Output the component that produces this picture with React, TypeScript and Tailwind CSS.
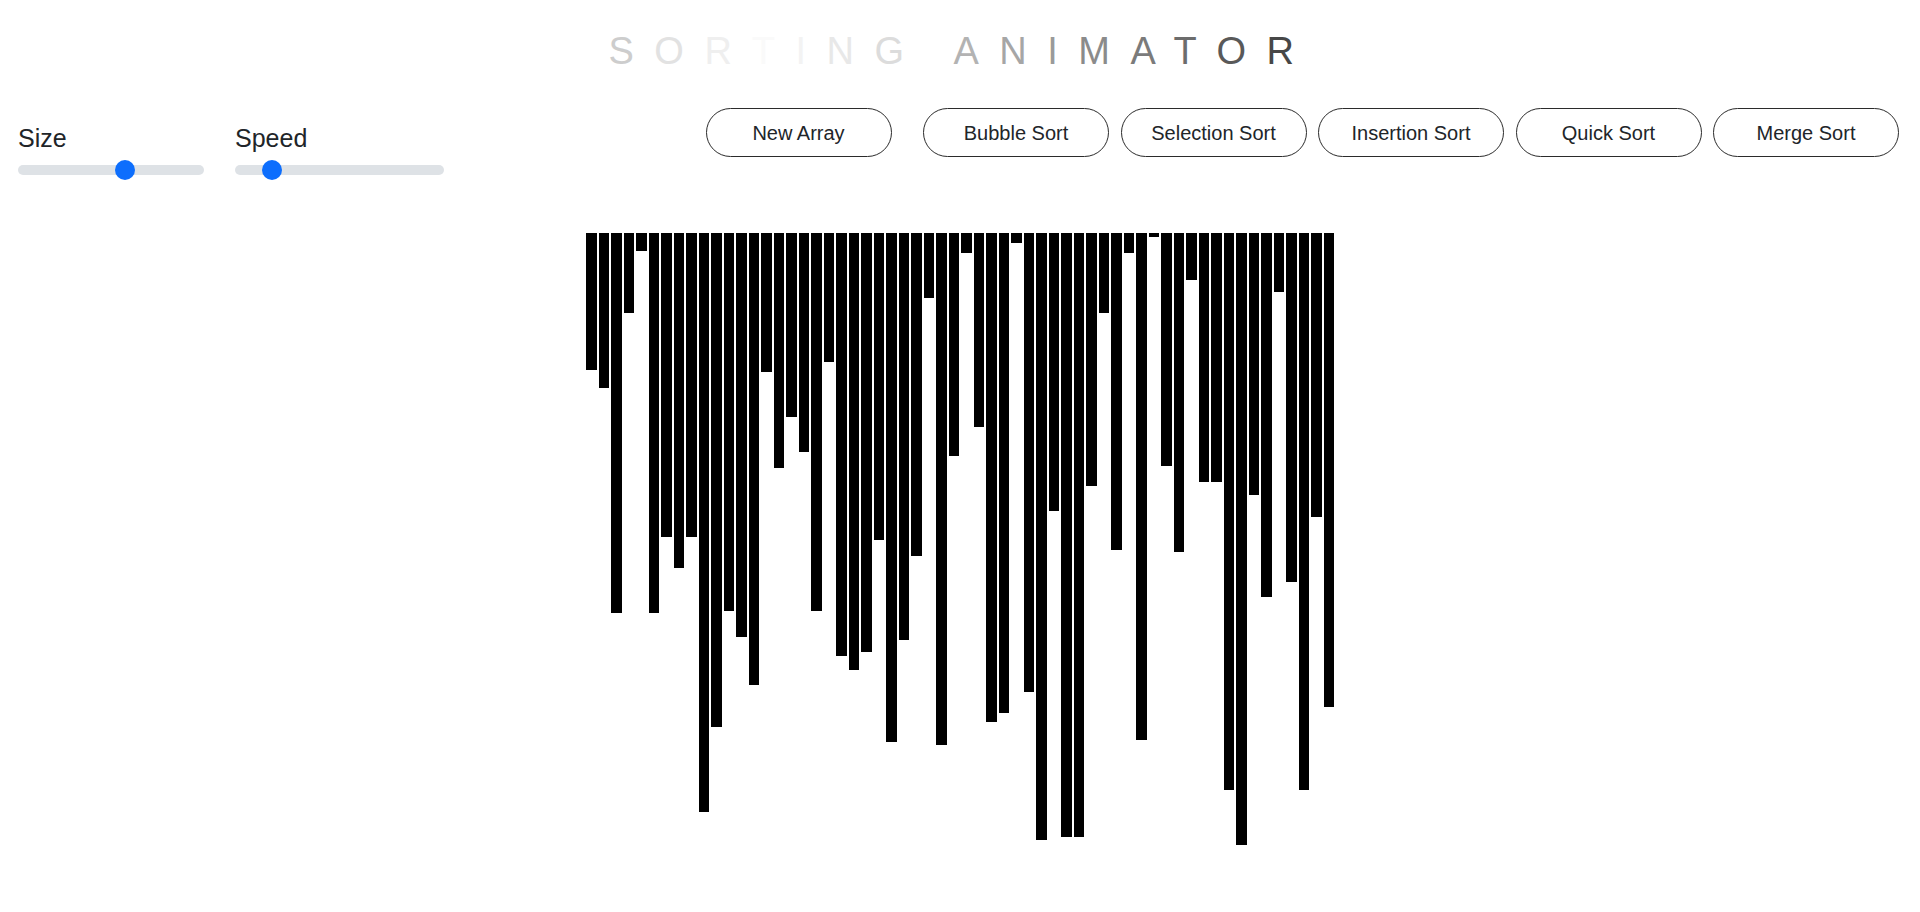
import React from "react";

const TITLE: { ch: string; color: string }[] = [
  { ch: "S", color: "#cdcdcd" },
  { ch: "O", color: "#e2e2e2" },
  { ch: "R", color: "#efefef" },
  { ch: "T", color: "#fafafa" },
  { ch: "I", color: "#f3f3f3" },
  { ch: "N", color: "#e8e8e8" },
  { ch: "G", color: "#dcdcdc" },
  { ch: " ", color: "#ffffff" },
  { ch: "A", color: "#b3b3b3" },
  { ch: "N", color: "#a6a6a6" },
  { ch: "I", color: "#9a9a9a" },
  { ch: "M", color: "#8b8b8b" },
  { ch: "A", color: "#7b7b7b" },
  { ch: "T", color: "#6c6c6c" },
  { ch: "O", color: "#595959" },
  { ch: "R", color: "#474747" },
];

const HEIGHTS = [
  137, 155, 380, 80, 18, 380, 304, 335, 304, 579, 494, 378, 404, 452, 139,
  235, 184, 219, 378, 129, 423, 437, 419, 307, 509, 407, 323, 65, 512, 223,
  20, 194, 489, 480, 10, 459, 607, 278, 604, 604, 253, 80, 317, 20, 507, 4,
  233, 319, 47, 249, 249, 557, 612, 262, 364, 59, 349, 557, 284, 474,
];

const SORTS = [
  "Bubble Sort",
  "Selection Sort",
  "Insertion Sort",
  "Quick Sort",
  "Merge Sort",
];

function Slider({
  label,
  width,
  thumb,
}: {
  label: string;
  width: number;
  thumb: number;
}) {
  return (
    <div className="flex flex-col" style={{ width }}>
      <div className="text-[25px] leading-[25px] text-[#212529]">{label}</div>
      <div className="relative mt-[14px] h-[10px] w-full rounded-full bg-[#dee2e6]">
        <div
          className="absolute top-1/2 h-5 w-5 -translate-y-1/2 rounded-full bg-[#0d6efd]"
          style={{ left: thumb }}
        />
      </div>
    </div>
  );
}

function PillButton({ children }: { children: React.ReactNode }) {
  return (
    <button className="flex h-[49px] w-[186px] items-center justify-center rounded-full border border-[#2b2b2b] bg-white text-[20px] leading-none text-[#212529]">
      {children}
    </button>
  );
}

export default function App() {
  return (
    <div className="min-h-screen w-full bg-white font-['Liberation_Sans',Arial,sans-serif]">
      <h1 className="pl-[3px] pt-[33px] text-center text-[38px] font-normal leading-[37.5px] tracking-[20.5px] whitespace-pre">
        {TITLE.map((t, i) => (
          <span key={i} style={{ color: t.color }}>
            {t.ch}
          </span>
        ))}
      </h1>

      <div className="mt-[37.5px] flex h-[67px] items-start justify-between">
        <div className="flex gap-[31px] pl-[18px] pt-[18px]">
          <Slider label="Size" width={186} thumb={97} />
          <Slider label="Speed" width={209} thumb={27} />
        </div>
        <div className="flex items-center pr-[21px]">
          <div className="mr-[31.5px]">
            <PillButton>New Array</PillButton>
          </div>
          <div className="flex gap-[11.5px]">
            {SORTS.map((s) => (
              <PillButton key={s}>{s}</PillButton>
            ))}
          </div>
        </div>
      </div>

      <div className="mt-[58px] flex items-start justify-center">
        {HEIGHTS.map((h, i) => (
          <div
            key={i}
            className="mx-px w-[10.5px] bg-black"
            style={{ height: h }}
          />
        ))}
      </div>
    </div>
  );
}
